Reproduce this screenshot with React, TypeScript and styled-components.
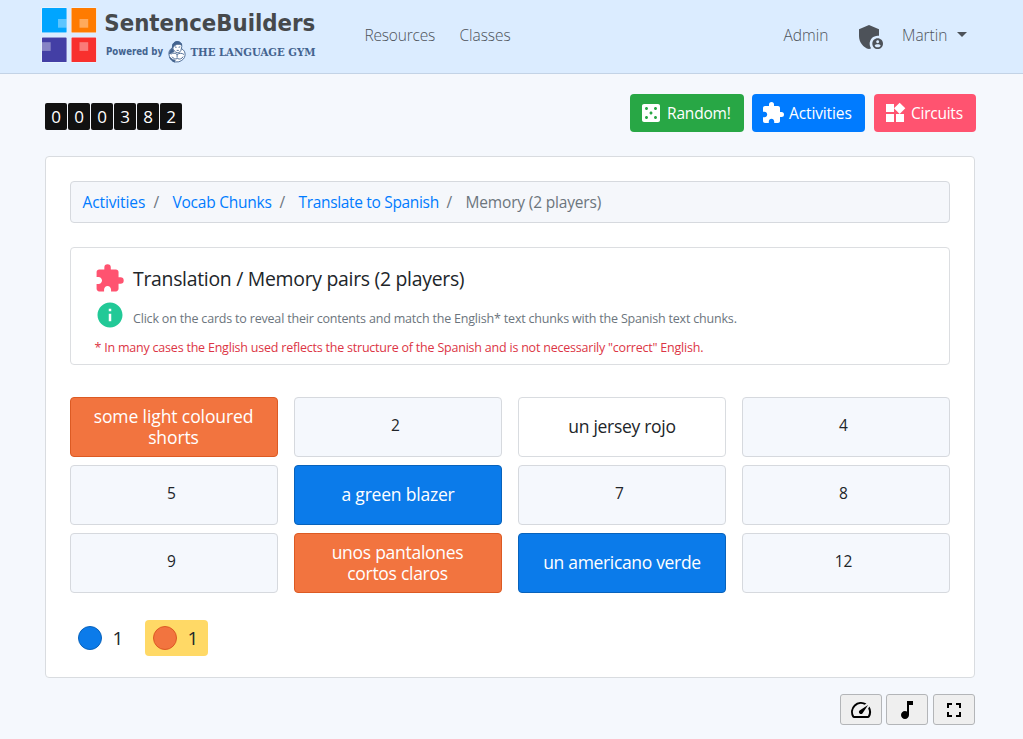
import React from 'react';
import styled, { createGlobalStyle } from 'styled-components';
import {
  MdAdminPanelSettings,
  MdCasino,
  MdExtension,
  MdFullscreen,
  MdInfo,
  MdMusicNote,
  MdSpeed,
  MdWidgets,
} from 'react-icons/md';

const GlobalStyle = createGlobalStyle`
  *, *::before, *::after { box-sizing: border-box; }
  body {
    margin: 0;
    background: #f5f8fd;
    color: #212529;
    font-family: "Open Sans", "Noto Sans", sans-serif;
    font-size: 15.5px;
    line-height: 24px;
    overflow: hidden;
  }
  svg { display: block; flex: none; }
`;

const Page = styled.div`
  height: 739px;
`;

const Text = styled.span<{ $track?: number }>`
  white-space: nowrap;
  letter-spacing: ${(p) => p.$track ?? 0}px;
`;

const Header = styled.header`
  display: flex;
  height: 74px;
  padding: 0 56px 0 40px;
  background: #dbecff;
  border-bottom: 1px solid #c3d3e6;
`;

const Nav = styled.nav`
  display: flex;
  align-items: center;
  flex: 1;
  height: 71px;
  padding-left: 34.5px;
  color: #4d5259;
  font-weight: 300;
`;

const NavLink = styled.a<{ $width: number; $push?: boolean }>`
  width: ${(p) => p.$width}px;
  margin-left: ${(p) => (p.$push ? 'auto' : '0')};
  padding-bottom: 1px;
`;

const AdminIcon = styled(MdAdminPanelSettings)`
  margin: 2px 15px 0 0;
`;

const Caret = styled.span`
  width: 0;
  height: 0;
  margin: -2px 0 0 8px;
  border: 5px solid transparent;
  border-top-color: #4d5259;
  border-bottom: 0;
`;

const Toolbar = styled.div`
  display: flex;
  align-items: flex-start;
  justify-content: space-between;
  height: 82px;
  padding: 20px 47px 0 45px;
`;

const Counter = styled.div`
  display: flex;
  gap: 1px;
  padding-top: 9px;
`;

const Digit = styled.span`
  width: 22px;
  height: 27px;
  border-radius: 2px;
  background: #111;
  color: #fff;
  font-size: 17px;
  line-height: 27px;
  text-align: center;
`;

const Actions = styled.div`
  display: flex;
`;

const ActionButton = styled.button<{ $color: string; $width: number; $after: number }>`
  display: flex;
  align-items: center;
  gap: 4px;
  width: ${(p) => p.$width}px;
  height: 38px;
  margin-right: ${(p) => p.$after}px;
  padding: 0 0 0 9px;
  border: 0;
  border-radius: 4px;
  background: ${(p) => p.$color};
  color: #fff;
  font: inherit;
`;

const Panel = styled.main`
  width: 930px;
  height: 522px;
  margin-left: 45px;
  padding: 24px;
  border: 1px solid #d9dce0;
  border-radius: 4px;
  background: #fff;
`;

const Breadcrumb = styled.div`
  display: flex;
  align-items: center;
  height: 42px;
  padding-left: 11.5px;
  border: 1px solid #d6d9de;
  border-radius: 4px;
  background: #f5f7fb;
  color: #6c757d;
`;

const Crumb = styled.a<{ $width: number }>`
  width: ${(p) => p.$width}px;
  color: #007bff;
`;

const Slash = styled.span`
  width: 19px;
`;

const Intro = styled.section`
  height: 118px;
  margin-top: 24px;
  padding: 14px 23px 0;
  border: 1px solid #dcdee1;
  border-radius: 4px;
`;

const IntroTitle = styled.h1`
  display: flex;
  align-items: center;
  gap: 8px;
  height: 32px;
  margin: 0;
  font-size: 19.4px;
  font-weight: 400;

  span { padding-top: 2px; }
`;

const IntroHint = styled.div`
  display: flex;
  align-items: center;
  gap: 8px;
  height: 40px;
  margin-top: 1px;
  padding-left: 1px;
  color: #6c757d;
  font-size: 12.5px;

  span { padding-top: 7px; }
`;

const IntroNote = styled.div`
  height: 24px;
  margin-top: 1px;
  padding-left: 0.5px;
  color: #dc3545;
  font-size: 12.5px;
`;

const Board = styled.div`
  display: grid;
  grid-template-columns: repeat(4, 208px);
  grid-auto-rows: 60px;
  gap: 8px 16px;
  margin-top: 32px;
`;

const tones = {
  hidden: { background: '#f5f8fd', border: '#d6d9de', color: '#212529' },
  open: { background: '#ffffff', border: '#d9dce0', color: '#212529' },
  blue: { background: '#0b7bea', border: '#0862bb', color: '#ffffff' },
  orange: { background: '#f2743f', border: '#dc5a23', color: '#ffffff' },
};
type Tone = keyof typeof tones;

const tilePadding: Record<Tone, string> = {
  hidden: '0 5px 3px 0',
  open: '0 12px 2px',
  blue: '0 12px 2px',
  orange: '0 13px 0 12px',
};

const Tile = styled.div<{ $tone: Tone; $track: number }>`
  display: flex;
  align-items: center;
  justify-content: center;
  padding: ${(p) => tilePadding[p.$tone]};
  border: 1px solid ${(p) => tones[p.$tone].border};
  border-radius: 4px;
  background: ${(p) => tones[p.$tone].background};
  color: ${(p) => tones[p.$tone].color};
  font-size: ${(p) => (p.$tone === 'hidden' ? 15.5 : 17.5)}px;
  letter-spacing: ${(p) => p.$track}px;
  line-height: 21px;
  text-align: center;
`;

const Scores = styled.div`
  display: flex;
  gap: 12px;
  margin-top: 27px;
`;

const Score = styled.div<{ $active?: boolean }>`
  display: flex;
  align-items: center;
  gap: 10.5px;
  width: 63px;
  height: 36px;
  padding-left: 8px;
  border-radius: 4px;
  background: ${(p) => (p.$active ? '#ffd966' : 'transparent')};
  font-size: 19px;
`;

const Disc = styled.span<{ $tone: Tone }>`
  width: 24px;
  height: 24px;
  border: 1px solid ${(p) => tones[p.$tone].border};
  border-radius: 50%;
  background: ${(p) => tones[p.$tone].background};
`;

const Tools = styled.div`
  display: flex;
  justify-content: flex-end;
  padding: 16px 48px 0 0;
`;

const ToolButton = styled.button<{ $before?: number }>`
  display: flex;
  align-items: center;
  justify-content: center;
  width: 42px;
  height: 31px;
  margin-left: ${(p) => p.$before ?? 0}px;
  padding: 0;
  border: 1px solid #b3b5b8;
  border-radius: 3px;
  background: #efefef;
  color: #000;
`;

const squares = [
  { x: 2, y: 8, fill: '#00a5ff', ix: 18, iy: 19 },
  { x: 31.5, y: 8, fill: '#ff7b00', ix: 39.5, iy: 19 },
  { x: 2, y: 37.5, fill: '#433fa5', ix: 2, iy: 42.2 },
  { x: 31.5, y: 37.5, fill: '#f8302e', ix: 39.5, iy: 42.2 },
];

function Logo() {
  return (
    <svg width="290" height="72" viewBox="0 0 290 72">
      {squares.map((s) => (
        <g key={s.fill}>
          <rect x={s.x - 0.5} y={s.y - 0.5} width="25.6" height="25.6" rx="1" fill="#fff" opacity="0.6" />
          <rect x={s.x} y={s.y} width="24.6" height="24.6" rx="0.6" fill={s.fill} />
          <rect x={s.ix} y={s.iy} width="8.7" height="8.7" fill="#fff" opacity="0.36" />
        </g>
      ))}
      <text x="64.3" y="31" fontFamily="DejaVu Sans Condensed, DejaVu Sans" fontStretch="condensed" fontWeight="700" fontSize="23.6" fill="#46494c" textLength="211" lengthAdjust="spacingAndGlyphs">SentenceBuilders</text>
      <text x="66" y="55" fontFamily="DejaVu Sans, sans-serif" fontWeight="700" fontSize="9.6" fill="#43638f" textLength="57" lengthAdjust="spacingAndGlyphs">Powered by</text>
      <g stroke="#43638f" strokeWidth="0.9" strokeLinejoin="round">
        <path d="M132.6 47.6c-2.7 1.4-3.9 3.8-3.7 6.6.3 3.6 2.4 6 5.3 7.8l4.6-.2c3.6-1.2 6-3.4 6.3-6.7.2-3-1.1-5.3-3.8-6.5z" fill="#fff" />
        <path d="M132.6 47.6c-.4-3.2 1.2-5.6 4.4-5.9 3.4-.1 5 1.8 4.8 4.9l-1 4.2c-1 1.5-2.2 2.1-3.6 1.9-2-.4-3.7-2.2-4.6-5.1z" fill="#fff" />
        <path d="M132.6 48c-.6-3.7 1.1-6.2 4.4-6.4 2.6 0 4.3 1.2 4.7 3.5-2.6-1.4-5.2-1-7 .5z" fill="#43638f" />
        <path d="M132.4 48.6c-1.9 1.3-2.9 3.3-2.9 5.4l2.5-1.6 1.8-.6z" fill="#43638f" />
        <path d="M129.6 57.2c.8 2.1 2.4 3.7 4.6 4.8l1-1.7c-2.1-.5-3.9-1.5-5.6-3.1z" fill="#43638f" />
        <path d="M135 47l1.6.3m2 0l1.7-.5m-3.6 3.6h2.1m-8 3.8c2.4-1.6 4.2-1.3 6.3.3 2.5-1.6 4.8-1.6 6.9 0m-6.9-.3v3.5m-5-1c1.5 2.2 3.3 2.8 5.2 1.8 2.6 1.2 4.6.4 5.8-1.9" fill="none" />
      </g>
      <text x="150.5" y="55.5" fontFamily="DejaVu Serif, serif" fontWeight="700" fontSize="10.4" fill="#43638f" textLength="125" lengthAdjust="spacingAndGlyphs">THE LANGUAGE GYM</text>
    </svg>
  );
}

type TileData = { tone: Tone; label: string; track?: number };

const tiles: TileData[] = [
  { tone: 'orange', label: 'some light coloured shorts', track: -0.1 },
  { tone: 'hidden', label: '2' },
  { tone: 'open', label: 'un jersey rojo', track: -0.3 },
  { tone: 'hidden', label: '4' },
  { tone: 'hidden', label: '5' },
  { tone: 'blue', label: 'a green blazer', track: -0.2 },
  { tone: 'hidden', label: '7' },
  { tone: 'hidden', label: '8' },
  { tone: 'hidden', label: '9' },
  { tone: 'orange', label: 'unos pantalones cortos claros', track: -0.28 },
  { tone: 'blue', label: 'un americano verde', track: -0.33 },
  { tone: 'hidden', label: '12' },
];

export default function App() {
  return (
    <Page>
      <GlobalStyle />
      <Header>
        <Logo />
        <Nav>
          <NavLink $width={95}><Text $track={-0.2}>Resources</Text></NavLink>
          <NavLink $width={60}><Text $track={-0.05}>Classes</Text></NavLink>
          <NavLink $width={71.5} $push><Text>Admin</Text></NavLink>
          <AdminIcon size={32} />
          <NavLink $width={47}><Text>Martin</Text></NavLink>
          <Caret />
        </Nav>
      </Header>

      <Toolbar>
        <Counter>
          {'000382'.split('').map((d, i) => (
            <Digit key={i}>{d}</Digit>
          ))}
        </Counter>
        <Actions>
          <ActionButton $color="#28a745" $width={114} $after={8}>
            <MdCasino size={24} />
            <Text $track={-0.18}>Random!</Text>
          </ActionButton>
          <ActionButton $color="#007bff" $width={113} $after={9}>
            <MdExtension size={24} />
            <Text $track={-0.12}>Activities</Text>
          </ActionButton>
          <ActionButton $color="#ff5370" $width={102} $after={0}>
            <MdWidgets size={24} />
            <Text $track={-0.25}>Circuits</Text>
          </ActionButton>
        </Actions>
      </Toolbar>

      <Panel>
        <Breadcrumb>
          <Crumb $width={71}><Text $track={-0.12}>Activities</Text></Crumb>
          <Slash>/</Slash>
          <Crumb $width={107}><Text $track={-0.24}>Vocab Chunks</Text></Crumb>
          <Slash>/</Slash>
          <Crumb $width={148}><Text $track={-0.33}>Translate to Spanish</Text></Crumb>
          <Slash>/</Slash>
          <Text $track={-0.17}>Memory (2 players)</Text>
        </Breadcrumb>

        <Intro>
          <IntroTitle>
            <MdExtension size={31} color="#ff5370" />
            <Text $track={-0.28}>Translation / Memory pairs (2 players)</Text>
          </IntroTitle>
          <IntroHint>
            <MdInfo size={30} color="#22c997" />
            <Text $track={-0.19}>Click on the cards to reveal their contents and match the English* text chunks with the Spanish text chunks.</Text>
          </IntroHint>
          <IntroNote>
            <Text $track={-0.215}>* In many cases the English used reflects the structure of the Spanish and is not necessarily "correct" English.</Text>
          </IntroNote>
        </Intro>

        <Board>
          {tiles.map((t) => (
            <Tile key={t.label} $tone={t.tone} $track={t.track ?? 0}>
              {t.label}
            </Tile>
          ))}
        </Board>

        <Scores>
          <Score><Disc $tone="blue" />1</Score>
          <Score $active><Disc $tone="orange" />1</Score>
        </Scores>
      </Panel>

      <Tools>
        <ToolButton><MdSpeed size={24} /></ToolButton>
        <ToolButton $before={4}><MdMusicNote size={24} /></ToolButton>
        <ToolButton $before={5}><MdFullscreen size={24} /></ToolButton>
      </Tools>
    </Page>
  );
}
